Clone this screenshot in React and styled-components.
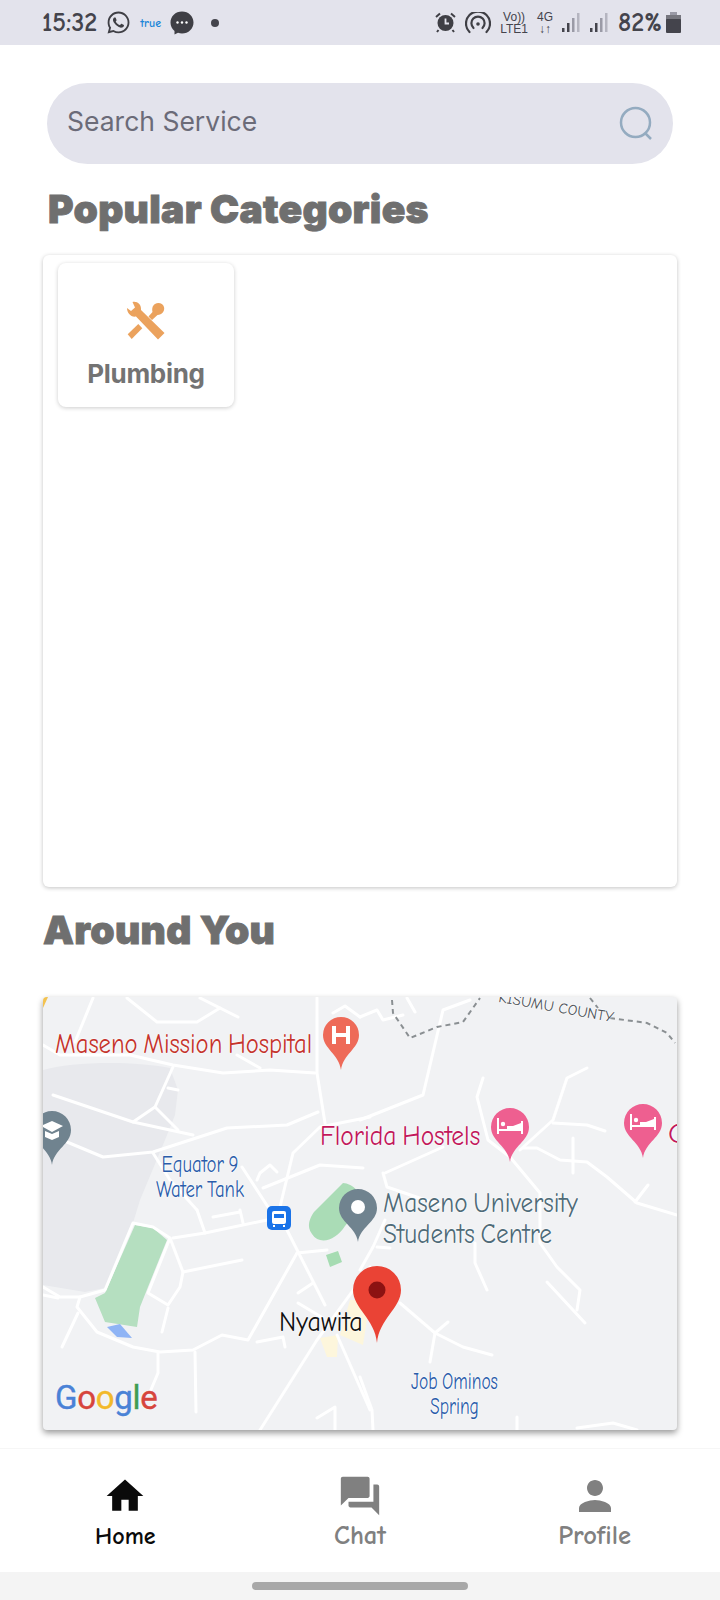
import styled, { createGlobalStyle } from "styled-components";
import { FaWhatsapp } from "react-icons/fa";
import { MdHome, MdQuestionAnswer, MdPerson } from "react-icons/md";

const HAND = `"Comic Neue", cursive, "Liberation Sans", sans-serif`;

const GlobalStyle = createGlobalStyle`
  html, body {
    margin: 0;
    padding: 0;
    background: #fff;
  }
`;

const Page = styled.div`
  width: 720px;
  height: 1600px;
  display: flex;
  flex-direction: column;
  overflow: hidden;
  background: #fff;
  font-family: "Inter", "Liberation Sans", sans-serif;
`;

const StatusBar = styled.div`
  height: 45px;
  flex: none;
  background: #e3e3ec;
  color: #44444c;
  display: flex;
  align-items: center;
  justify-content: space-between;
  padding: 0 39px 0 42px;
`;

const StatusGroup = styled.div`
  display: flex;
  align-items: center;
  gap: ${(p) => p.$gap || 10}px;
`;

const StatusText = styled.span`
  font-family: ${HAND};
  font-size: 26px;
  font-weight: 700;
  line-height: 1;
`;

const TrueMark = styled.span`
  font-family: ${HAND};
  font-weight: 700;
  font-size: 12px;
  color: #1b86d8;
`;

const NetStack = styled.div`
  display: flex;
  flex-direction: column;
  align-items: center;
  font-family: "Liberation Sans", sans-serif;
  font-size: 12px;
  line-height: 12px;
  color: #44444c;
`;

const Dot = styled.span`
  width: 8px;
  height: 8px;
  border-radius: 50%;
  background: #44444c;
  margin-left: 8px;
`;

const SearchBar = styled.div`
  margin: 38px 47px 0 47px;
  height: 81px;
  flex: none;
  border-radius: 41px;
  background: #e3e3ec;
  display: flex;
  align-items: center;
  justify-content: space-between;
  padding: 0 18px 0 20px;
  color: #6b6b78;
  font-size: 26.5px;
`;

const SearchText = styled.span`
  margin-bottom: 6px;
`;

const Heading = styled.h2`
  margin: ${(p) => p.$top}px 0 0 ${(p) => p.$left}px;
  height: ${(p) => p.$height}px;
  font-size: 39px;
  font-weight: 900;
  line-height: ${(p) => p.$height}px;
  letter-spacing: 0.3px;
  color: #6f6f6f;
  -webkit-text-stroke: 0.9px #6f6f6f;
`;

const CategoryPanel = styled.div`
  margin: ${(p) => p.$top || 0}px 43px 0 43px;
  height: 632px;
  flex: none;
  box-sizing: border-box;
  padding: 8px 15px;
  border-radius: 6px;
  background: #fff;
  box-shadow: 0 1px 4px rgba(0, 0, 0, 0.24);
`;

const CategoryCard = styled.div`
  width: 176px;
  height: 144px;
  box-sizing: border-box;
  padding-top: 38px;
  border-radius: 8px;
  background: #fff;
  box-shadow: 0 1px 4px rgba(0, 0, 0, 0.2);
  display: flex;
  flex-direction: column;
  align-items: center;
  gap: 18px;
`;

const CategoryName = styled.span`
  font-size: 26px;
  font-weight: 700;
  line-height: 30px;
  letter-spacing: -0.3px;
  color: #737373;
`;

const MapBox = styled.div`
  position: relative;
  margin: 40px 43px 0 43px;
  height: 433px;
  flex: none;
  overflow: hidden;
  border-radius: 4px;
  background: #f1f2f4;
  box-shadow: 0 3px 6px rgba(0, 0, 0, 0.4);
`;

const MapDrawing = styled.svg`
  position: absolute;
  inset: 0;
  width: 100%;
  height: 100%;
`;

const MapLabel = styled.span`
  position: absolute;
  left: ${(p) => p.$x - 43}px;
  top: ${(p) => p.$y - 997}px;
  font-family: ${HAND};
  font-size: ${(p) => p.$size || 29}px;
  line-height: ${(p) => p.$lead || (p.$size || 29)}px;
  color: ${(p) => p.$color};
  text-align: ${(p) => p.$align || "left"};
  white-space: pre;
  word-spacing: ${(p) => p.$words || 0}px;
  transform-origin: left top;
  transform: rotate(${(p) => p.$turn || 0}deg) scaleX(${(p) => p.$squeeze || 1});
  text-shadow: 0 0 2px #fff, 0 0 2px #fff;
`;

const GoogleMark = styled.div`
  position: absolute;
  left: 12px;
  bottom: 12px;
  font-family: "Roboto", "Liberation Sans", sans-serif;
  font-size: 33px;
  font-weight: 400;
  line-height: 40px;
  letter-spacing: -0.3px;
  -webkit-text-stroke: 0.4px currentColor;
  text-shadow: 0 0 2px #fff;
`;

const Letter = styled.span`
  color: ${(p) => p.$color};
`;

const BottomNav = styled.nav`
  margin-top: 18px;
  height: 124px;
  flex: none;
  box-sizing: border-box;
  padding: 22px 8px 0;
  display: grid;
  grid-template-columns: repeat(3, 1fr);
  background: #fff;
  border-top: 1px solid #f6f6f6;
`;

const NavItem = styled.div`
  display: flex;
  flex-direction: column;
  align-items: center;
  color: ${(p) => (p.$active ? "#0a0a0a" : "#808080")};
`;

const NavIcon = styled.div`
  height: 50px;
  display: flex;
  align-items: center;
  justify-content: center;
`;

const NavLabel = styled.span`
  font-family: ${HAND};
  font-size: ${(p) => (p.$active ? 24 : 26.5)}px;
  font-weight: 700;
  line-height: 28px;
  margin-top: 1px;
`;

const GestureArea = styled.div`
  flex: 1;
  background: #f4f4f4;
  display: flex;
  justify-content: center;
  align-items: center;
`;

const GesturePill = styled.div`
  width: 216px;
  height: 8px;
  border-radius: 4px;
  background: #a8a8a8;
`;

function Pin({ x, y, r, tip, color }) {
  return (
    <path
      d={`M${x} ${tip} C${x - 2} ${tip - (tip - y) * 0.45} ${x - r} ${y + r * 0.75} ${x - r} ${y} A${r} ${r} 0 1 1 ${x + r} ${y} C${x + r} ${y + r * 0.75} ${x + 2} ${tip - (tip - y) * 0.45} ${x} ${tip}Z`}
      fill={color}
    />
  );
}

function Bed({ x, y }) {
  return (
    <g fill="none" stroke="#fff">
      <path d={`M${x - 12} ${y - 9}V${y + 7}M${x + 12} ${y - 6}V${y + 7}M${x - 12} ${y + 3}H${x + 12}`} strokeWidth="2" />
      <circle cx={x - 7} cy={y - 3} r="2.2" fill="#fff" stroke="none" />
      <path d={`M${x - 3} ${y - 1}H${x + 3}L${x + 11} ${y - 4}V${y + 2}H${x - 3}Z`} fill="#fff" stroke="none" />
    </g>
  );
}

const ROADS = [
  "M93 998L75 1042",
  "M127 998L157 1022L197 1022L220 1008",
  "M200 998L238 1017",
  "M317 998L317 1073L325 1123",
  "M43 1045L60 1055L130 1055L173 1065L223 1073L270 1070L315 1073",
  "M237 1055L260 1068",
  "M173 1067L155 1107L133 1122",
  "M168 1088L178 1090",
  "M53 1095L133 1122L193 1135",
  "M155 1107L178 1130",
  "M67 1142L103 1157L153 1152L227 1128L287 1125L318 1112",
  "M153 1153L170 1180L197 1210",
  "M242 1167L268 1207",
  "M257 1180L260 1173L270 1165L277 1172",
  "M263 1188L320 1165L363 1168",
  "M280 1207L293 1153L320 1127L370 1117",
  "M360 1017L377 1010L383 1020L403 1015",
  "M407 998L415 1012",
  "M333 1013L345 1006L360 1017",
  "M470 1000L443 1010L423 1095L360 1120",
  "M483 1078L477 1097L488 1140L510 1157L540 1193L540 1243L557 1267L580 1290L577 1310",
  "M587 1068L567 1078L553 1120L520 1150",
  "M553 1123L587 1125L605 1131",
  "M523 1148L537 1148L560 1160L587 1162L607 1177L637 1203L677 1215",
  "M573 1138L573 1173",
  "M648 1185L635 1202",
  "M385 1173L443 1147",
  "M383 1173L387 1187L440 1205",
  "M385 1220L373 1247L360 1270",
  "M377 1247L390 1248",
  "M475 1243L475 1263L487 1290",
  "M547 1282L585 1323",
  "M400 1303L435 1333L463 1347L492 1355",
  "M448 1322L435 1333L430 1362",
  "M517 1417L517 1430",
  "M577 1428L613 1423L637 1430",
  "M360 1377L372 1410L373 1430",
  "M197 1210L205 1233",
  "M173 1238L205 1233L267 1220",
  "M240 1210L243 1223M213 1217L240 1212",
  "M80 1297L105 1290L133 1223L153 1227L170 1238L183 1272L180 1287L168 1305L148 1293L170 1238",
  "M183 1272L242 1260",
  "M168 1308L162 1332",
  "M43 1287L60 1297L80 1297L77 1307L97 1332L133 1347L160 1352L193 1350L222 1335L248 1340L297 1253L327 1250",
  "M43 1295L58 1298",
  "M78 1313L62 1347",
  "M158 1352L158 1373L150 1392",
  "M195 1352L196 1412",
  "M257 1342L283 1337L285 1347",
  "M287 1230L325 1305",
  "M298 1293L313 1283",
  "M298 1303L323 1318",
  "M260 1430L317 1340L370 1267",
  "M317 1418L335 1407L335 1430",
  "M337 1335L370 1410",
];

function MapArt() {
  return (
    <MapDrawing viewBox="43 997 634 433">
      <path
        d="M43 1070C70 1062 130 1060 170 1068L178 1090L175 1115L165 1140L140 1200L133 1223L105 1288L85 1292L43 1285Z"
        fill="#e8e9ed"
      />
      <path d="M135 1225L153 1228L167 1240L148 1287L140 1307L137 1327L105 1322L95 1298L105 1293Z" fill="#b5dfc0" />
      <path d="M107 1327L120 1324L132 1338L117 1337Z" fill="#8fb4f5" />
      <path d="M343 1183C352 1183 365 1195 362 1205L345 1226C336 1240 320 1246 312 1234C306 1226 310 1218 314 1212Z" fill="#aadcb6" />
      <path d="M326 1255L338 1251L342 1262L330 1267Z" fill="#a6dcb2" />
      <path d="M320 1338L338 1335L337 1357L327 1357Z" fill="#fdf6dc" />
      <path d="M350 1300L370 1300L363 1345L340 1335Z" fill="#fdf6dc" />
      <path d="M43 1008L48 997H43Z" fill="#f3c24f" />
      <g fill="none" stroke="#fff" strokeWidth="3" strokeLinejoin="round" strokeLinecap="round">
        {ROADS.map((d) => (
          <path key={d} d={d} />
        ))}
      </g>
      <g fill="none" stroke="#8a8f92" strokeWidth="2" strokeDasharray="5 4">
        <path d="M392 1000L393 1013L410 1038L437 1027L463 1022L480 998" />
        <path d="M590 998L598 1008M610 1018L647 1023L667 1033L675 1043" />
      </g>

      <Pin x={341} y={1035} r={18} tip={1070} color="#ee6a58" />
      <path d="M334 1026V1044M348 1026V1044M334 1035H348" stroke="#fff" strokeWidth="4" fill="none" />

      <Pin x={52} y={1130} r={19} tip={1165} color="#70838f" />
      <path d="M41 1126L52 1121L63 1126L52 1132Z" fill="#fff" />
      <path d="M45 1131V1137L52 1140L59 1137V1131L52 1134Z" fill="#fff" />

      <Pin x={510} y={1127} r={19} tip={1162} color="#ee5f90" />
      <Bed x={510} y={1127} />
      <Pin x={643} y={1123} r={19} tip={1158} color="#ee5f90" />
      <Bed x={643} y={1123} />

      <Pin x={358} y={1208} r={19} tip={1242} color="#70838f" />
      <circle cx={358} cy={1207} r={7} fill="#fff" />

      <rect x={267} y={1206} width={24} height={24} rx={5} fill="#1a73e8" />
      <rect x={272} y={1211} width={14} height={13} rx={2} fill="#fff" />
      <rect x={274} y={1214} width={10} height={4} fill="#1a73e8" />
      <path d="M274 1225V1227M284 1225V1227" stroke="#fff" strokeWidth="2" />
    </MapDrawing>
  );
}

function Marker() {
  return (
    <MapDrawing viewBox="43 997 634 433">
      <Pin x={377} y={1290} r={24} tip={1343} color="#ea4335" />
      <circle cx={377} cy={1290} r={8.5} fill="#8c1212" />
    </MapDrawing>
  );
}

function WrenchIcon() {
  return (
    <svg width="40" height="40" viewBox="0 0 40 40" fill="#eba25d">
      <path d="M1 7L5 10L9 6.5L6.5 1C11 0 15.5 3 15 9L38.5 32L32 38.5L10 15.5C5 16.5 1 12 1 7Z" />
      <path d="M1.7 33.3L12.3 23L16.3 27.3L5.7 38Z" />
      <path d="M22.5 15.5L26 19L31.5 14C36 14 39 10 38 6C37 2 32 1 29 3C26 5 26 8 26.5 11Z" />
    </svg>
  );
}

function SearchIcon() {
  return (
    <svg width="36" height="36" viewBox="0 0 36 36" fill="none" stroke="#94abc0" strokeWidth="2.5">
      <circle cx="16.5" cy="16.5" r="14.5" />
      <path d="M26 27L32 33" />
    </svg>
  );
}

function BubbleIcon() {
  return (
    <svg width="24" height="24" viewBox="0 0 24 24">
      <path d="M12 0.5C5.5 0.5 0.5 5.3 0.5 11.5C0.5 15 2 18 4.5 20V23.5L8 21.7C9.3 22.2 10.6 22.5 12 22.5C18.5 22.5 23.5 17.7 23.5 11.5C23.5 5.3 18.5 0.5 12 0.5Z" fill="#3f3f45" />
      <circle cx="7.5" cy="11.5" r="1.2" fill="#fff" />
      <circle cx="12" cy="11.5" r="1.2" fill="#fff" />
      <circle cx="16.5" cy="11.5" r="1.2" fill="#fff" />
    </svg>
  );
}

function AlarmIcon() {
  return (
    <svg width="21" height="21" viewBox="0 0 21 21" fill="#3f3f45">
      <circle cx="10.5" cy="11" r="8" />
      <path d="M1 5L5 1.5M20 5L16 1.5" stroke="#3f3f45" strokeWidth="2" />
      <path d="M3.5 18L2 20M17.5 18L19 20" stroke="#3f3f45" strokeWidth="2" />
      <path d="M10.5 6.5V11.5H14" stroke="#e3e3ec" strokeWidth="1.8" fill="none" />
    </svg>
  );
}

function HotspotIcon() {
  return (
    <svg width="26" height="22" viewBox="0 0 26 22" fill="none" stroke="#3f3f45" strokeWidth="2.2" strokeLinecap="round">
      <path d="M4.5 20A12 12 0 1 1 21.5 20" />
      <path d="M8.5 16A6.6 6.6 0 1 1 17.5 16" />
      <circle cx="13" cy="12" r="1.8" fill="#3f3f45" stroke="none" />
    </svg>
  );
}

function SignalIcon() {
  return (
    <svg width="19" height="20" viewBox="0 0 19 20">
      <rect x="0" y="15" width="2.5" height="4" fill="#44444c" />
      <rect x="5" y="10" width="2.5" height="9" fill="#44444c" />
      <rect x="10" y="5" width="2.5" height="14" fill="#9a9aa6" />
      <rect x="15" y="0" width="2.5" height="19" fill="#b5b5c0" />
    </svg>
  );
}

const BatteryShape = styled.svg`
  margin-left: -5px;
`;

function BatteryIcon() {
  return (
    <BatteryShape width="15" height="21" viewBox="0 0 15 21">
      <rect x="4" y="0" width="7" height="3" fill="#9a9aa6" />
      <rect x="0" y="3" width="15" height="5" fill="#77777f" />
      <rect x="0" y="7" width="15" height="14" rx="1" fill="#44444c" />
    </BatteryShape>
  );
}

export default function App() {
  return (
    <Page>
      <GlobalStyle />
      <StatusBar>
        <StatusGroup $gap={9}>
          <StatusText>15:32</StatusText>
          <FaWhatsapp size={25} color="#3f3f45" />
          <TrueMark>true</TrueMark>
          <BubbleIcon />
          <Dot />
        </StatusGroup>
        <StatusGroup $gap={9}>
          <AlarmIcon />
          <HotspotIcon />
          <NetStack>
            <span>Vo))</span>
            <span>LTE1</span>
          </NetStack>
          <NetStack>
            <span>4G</span>
            <span>↓↑</span>
          </NetStack>
          <SignalIcon />
          <SignalIcon />
          <StatusText>82%</StatusText>
          <BatteryIcon />
        </StatusGroup>
      </StatusBar>

      <SearchBar>
        <SearchText>Search Service</SearchText>
        <SearchIcon />
      </SearchBar>

      <Heading $top={18} $left={48} $height={54}>Popular Categories</Heading>

      <CategoryPanel $top={19}>
        <CategoryCard>
          <WrenchIcon />
          <CategoryName>Plumbing</CategoryName>
        </CategoryCard>
      </CategoryPanel>

      <Heading $top={16} $left={43} $height={54}>Around You</Heading>

      <MapBox>
        <MapArt />
        <MapLabel $x={55} $y={1029} $squeeze={0.85} $words={-3} $color="#c5342c">Maseno Mission Hospital</MapLabel>
        <MapLabel $x={320} $y={1121} $squeeze={0.88} $words={-3} $color="#c2185b">Florida Hostels</MapLabel>
        <MapLabel $x={668} $y={1119} $color="#c2185b">G</MapLabel>
        <MapLabel $x={156} $y={1152} $size={24} $lead={25} $squeeze={0.78} $words={-2} $color="#2a5caa" $align="center">{"Equator 9\nWater Tank"}</MapLabel>
        <MapLabel $x={383} $y={1187} $lead={31} $squeeze={0.87} $words={-3} $color="#4f6b78">{"Maseno University\nStudents Centre"}</MapLabel>
        <MapLabel $x={279} $y={1307} $squeeze={0.9} $color="#111">Nyawita</MapLabel>
        <MapLabel $x={411} $y={1369} $size={24} $lead={25} $squeeze={0.73} $words={-2} $color="#2a5caa" $align="center">{"Job Ominos\nSpring"}</MapLabel>
        <MapLabel $x={500} $y={990} $size={15} $turn={10} $color="#4a4f55">KISUMU COUNTY</MapLabel>
        <Marker />
        <GoogleMark>
          <Letter $color="#4a82d6">G</Letter>
          <Letter $color="#d6453d">o</Letter>
          <Letter $color="#f2b92b">o</Letter>
          <Letter $color="#4a82d6">g</Letter>
          <Letter $color="#3f9d52">l</Letter>
          <Letter $color="#d6453d">e</Letter>
        </GoogleMark>
      </MapBox>

      <BottomNav>
        <NavItem $active>
          <NavIcon><MdHome size={44} /></NavIcon>
          <NavLabel $active>Home</NavLabel>
        </NavItem>
        <NavItem>
          <NavIcon><MdQuestionAnswer size={46} /></NavIcon>
          <NavLabel>Chat</NavLabel>
        </NavItem>
        <NavItem>
          <NavIcon><MdPerson size={48} /></NavIcon>
          <NavLabel>Profile</NavLabel>
        </NavItem>
      </BottomNav>

      <GestureArea>
        <GesturePill />
      </GestureArea>
    </Page>
  );
}
